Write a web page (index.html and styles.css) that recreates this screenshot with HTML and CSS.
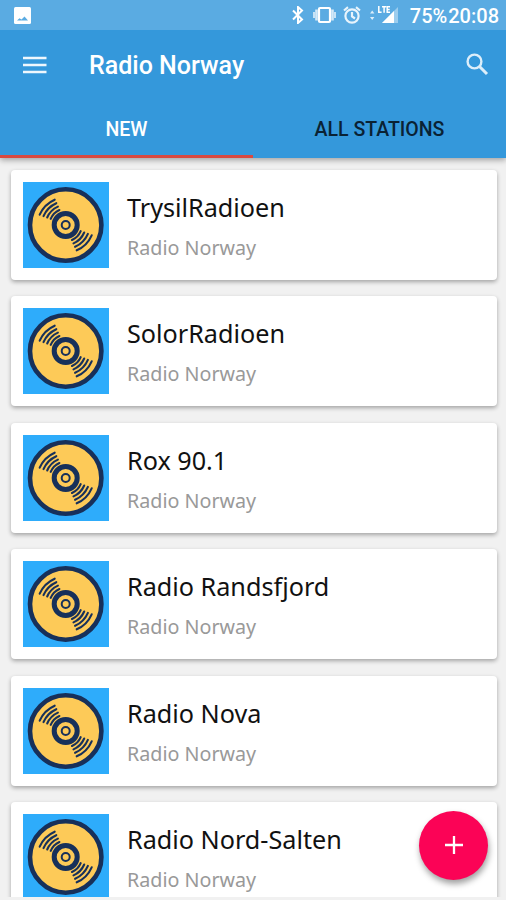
FILE: index.html
```html
<!DOCTYPE html>
<html lang="en">
<head>
  <meta charset="UTF-8" />
  <meta name="viewport" content="width=device-width, initial-scale=1" />
  <title>Radio Norway</title>
  <link rel="stylesheet" href="styles.css">
</head>
<body>
  <svg class="defs" width="0" height="0">
    <symbol id="disc" viewBox="0 0 86 86">
      <rect width="86" height="86" fill="#2eacfb" />
      <g transform="translate(42.7 43)" fill="none" stroke="#17305a" stroke-linecap="round">
        <circle r="35.7" fill="#fdca58" stroke-width="4.6" />
        <circle r="11.5" stroke-width="5" />
        <circle r="4" stroke-width="2" />
        <g id="grooves" stroke-width="2.1">
          <path d="M-26-10.3A29 29 0 0 1-11-25.3" />
          <path d="M-22.2-8.9A25 25 0 0 1-9.4-21.8" />
          <path d="M-18.5-7.5A21 21 0 0 1-7.8-18.4" />
          <path d="M-15-6.1A17 17 0 0 1-6.3-15" />
        </g>
        <use href="#grooves" transform="rotate(180)" />
      </g>
    </symbol>
  </svg>

  <div class="app">
    <header class="header">
      <div class="statusbar">
        <svg class="photo" width="17" height="17" viewBox="0 0 17 17">
          <rect width="17" height="17" rx="1.5" fill="#fff" />
          <path d="M3 13.5l2.5-2.3 2 1.3 3-3 3.5 4z" fill="#5aabe2" />
        </svg>
        <svg class="bluetooth" width="12" height="18" viewBox="0 0 12 18">
          <path d="M1 4.5l9 9-4 3.5V1l4 3.5-9 9" fill="none" stroke="#fff" stroke-width="2" />
        </svg>
        <svg class="vibrate" width="23" height="18" viewBox="0 0 23 18">
          <rect x="6" y="2" width="11" height="14" rx="1" fill="none" stroke="#fff" stroke-width="2.2" />
          <path d="M3.5 3.5v11M19.5 3.5v11" stroke="#d4e9f8" stroke-width="2.6" />
          <path d="M1 6v6M22 6v6" stroke="#d4e9f8" stroke-width="1.8" />
        </svg>
        <svg class="alarm" width="18" height="18" viewBox="0 0 18 18">
          <g fill="none" stroke="#e8f4fc" stroke-width="2.2">
            <circle cx="9" cy="10" r="6.6" />
            <path d="M1 4.5l4-3.3M17 4.5l-4-3.3M9 6v4.5l3 2" />
          </g>
        </svg>
        <svg class="signal" width="30" height="20" viewBox="0 0 30 20">
          <path d="M0 8.5l2.2-3 2.2 3zM0 12l2.2 3 2.2-3z" fill="#dceefa" />
          <path d="M28 2v16H12z" fill="#9ccdee" />
          <path d="M24 6v12H12z" fill="#fff" />
          <path d="M8.8 1v6.2h2.8M12 1.7h4.2M14.1 1.7v6M20 1.7h-2.8v5.5H20M17.2 4.4h2.5" fill="none" stroke="#fff" stroke-width="1.5" />
        </svg>
        <span class="battery">75%</span>
        <span class="clock">20:08</span>
      </div>

      <div class="toolbar">
        <svg class="menu" width="24" height="18" viewBox="0 0 24 18">
          <path d="M0 2h23.5M0 9h23.5M0 16h23.5" stroke="#eef7fd" stroke-width="2.5" />
        </svg>
        <h1>Radio Norway</h1>
        <svg class="search" width="23" height="23" viewBox="0 0 23 23">
          <circle cx="8.5" cy="8.5" r="6.9" fill="none" stroke="#dceefa" stroke-width="2.4" />
          <path d="M13.5 13.5l7.5 7.5" stroke="#dceefa" stroke-width="3" />
        </svg>
      </div>

      <nav class="tabs">
        <div class="tab active">NEW</div>
        <div class="tab">ALL STATIONS</div>
      </nav>
    </header>

    <main class="stations">
      <div class="card">
        <svg class="cover"><use href="#disc" /></svg>
        <div class="info">
          <div class="name">TrysilRadioen</div>
          <div class="category">Radio Norway</div>
        </div>
      </div>
      <div class="card">
        <svg class="cover"><use href="#disc" /></svg>
        <div class="info">
          <div class="name">SolorRadioen</div>
          <div class="category">Radio Norway</div>
        </div>
      </div>
      <div class="card">
        <svg class="cover"><use href="#disc" /></svg>
        <div class="info">
          <div class="name">Rox 90.1</div>
          <div class="category">Radio Norway</div>
        </div>
      </div>
      <div class="card">
        <svg class="cover"><use href="#disc" /></svg>
        <div class="info">
          <div class="name">Radio Randsfjord</div>
          <div class="category">Radio Norway</div>
        </div>
      </div>
      <div class="card">
        <svg class="cover"><use href="#disc" /></svg>
        <div class="info">
          <div class="name">Radio Nova</div>
          <div class="category">Radio Norway</div>
        </div>
      </div>
      <div class="card">
        <svg class="cover"><use href="#disc" /></svg>
        <div class="info">
          <div class="name">Radio Nord-Salten</div>
          <div class="category">Radio Norway</div>
        </div>
      </div>
    </main>

    <button class="fab" aria-label="Add">
      <svg width="18" height="18" viewBox="0 0 18 18">
        <path d="M9 0v18M0 9h18" stroke="#fff" stroke-width="2.3" />
      </svg>
    </button>
  </div>
</body>
</html>
```

FILE: styles.css
```css
:root {
  --primary: #3498db;
  --statusbar: #5aabe2;
  --accent: #d9493f;
  --fab: #fb0356;
  --background: #f1f1f1;
}

* {
  box-sizing: border-box;
}

body {
  margin: 0;
  background-color: var(--background);
  font-family: "Noto Sans", sans-serif;
}

.defs {
  display: block;
}

.app {
  position: relative;
  display: flex;
  flex-direction: column;
  height: 900px;
  padding-bottom: 3px;
  overflow: hidden;
}

.header {
  position: relative;
  z-index: 1;
  height: 157.5px;
  flex: none;
  background-color: var(--primary);
  color: #fff;
  font-family: Roboto, sans-serif;
  font-weight: 500;
  box-shadow: 0 2px 6px rgba(0, 0, 0, 0.35);
}

.statusbar {
  display: flex;
  align-items: center;
  height: 30px;
  padding: 0 7px 0 14px;
  background-color: var(--statusbar);
  font-size: 20px;
}

.photo {
  margin-right: auto;
}

.vibrate {
  margin-left: 9px;
}

.alarm {
  margin-left: 7px;
}

.signal {
  margin-left: 9px;
}

.battery {
  margin-left: 10px;
}

.battery,
.clock {
  padding-top: 2px;
}

.clock {
  margin-left: 1px;
}

.toolbar {
  display: flex;
  align-items: center;
  height: 69px;
  padding: 0 17px 0 23px;
}

.toolbar h1 {
  margin: 2px auto 0 42px;
  font-size: 25px;
  font-weight: 500;
}

.tabs {
  display: flex;
  height: 58.5px;
}

.tab {
  flex: 1;
  height: 58.5px;
  color: #0a2234;
  font-size: 19.5px;
  line-height: 62px;
  text-align: center;
}

.tab.active {
  border-bottom: 3px solid var(--accent);
  color: #fff;
}

.stations {
  display: flex;
  flex-direction: column;
  flex: 1;
  gap: 16.6px;
  min-height: 0;
  padding: 12px 9.5px 0 11px;
  overflow: hidden;
}

.card {
  display: flex;
  flex: none;
  height: 110px;
  padding: 12px;
  border-radius: 4px;
  background-color: #fff;
  box-shadow: 0 2px 4px rgba(0, 0, 0, 0.32);
}

.cover {
  width: 86px;
  height: 86px;
}

.info {
  padding-left: 18px;
}

.name {
  margin-top: 7px;
  color: #111;
  font-size: 25.2px;
  line-height: 36px;
  white-space: nowrap;
}

.category {
  margin-top: 9px;
  color: #999;
  font-size: 19.7px;
  line-height: 28px;
}

.fab {
  position: absolute;
  right: 18px;
  bottom: 20.5px;
  display: flex;
  align-items: center;
  justify-content: center;
  width: 69px;
  height: 69px;
  padding: 0;
  border: none;
  border-radius: 50%;
  background-color: var(--fab);
  box-shadow: 1px 4px 6px rgba(0, 0, 0, 0.38);
  z-index: 2;
}
```
